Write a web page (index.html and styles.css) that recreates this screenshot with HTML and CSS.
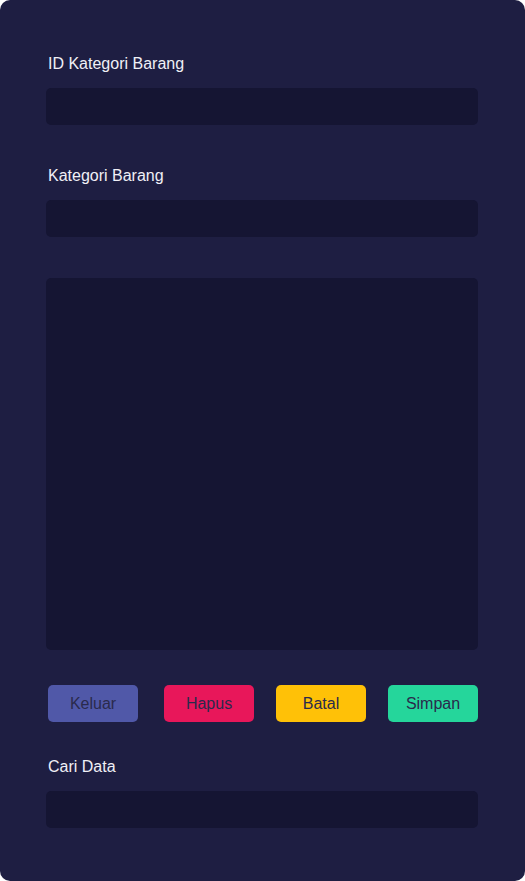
FILE: index.html
```html
<!DOCTYPE html>
<html>
<head>
<meta charset="utf-8">
<link rel="stylesheet" href="styles.css">
</head>
<body>
<div class="panel">
  <label class="label first">ID Kategori Barang</label>
  <div class="field"></div>
  <label class="label second">Kategori Barang</label>
  <div class="field"></div>
  <div class="area"></div>
  <div class="buttons">
    <button class="btn keluar">Keluar</button>
    <button class="btn hapus">Hapus</button>
    <button class="btn batal">Batal</button>
    <button class="btn simpan">Simpan</button>
  </div>
  <label class="label third">Cari Data</label>
  <div class="field"></div>
</div>
</body>
</html>
```
FILE: styles.css
```css
html, body {
  margin: 0;
  padding: 0;
  background: #ffffff;
}
.panel {
  box-sizing: border-box;
  width: 525px;
  height: 881px;
  background: #1e1e42;
  border-radius: 10px;
  padding: 55px 47px 0 46px;
  font-family: "Liberation Sans", Arial, sans-serif;
}
.label {
  display: block;
  font-size: 16px;
  line-height: 18px;
  color: #f0f0f6;
  padding-left: 2px;
  margin-bottom: 15px;
}
.label.second {
  margin-top: 42px;
}
.label.third {
  margin-top: 36px;
}
.field {
  height: 37px;
  background: #151533;
  border-radius: 5px;
}
.area {
  margin-top: 41px;
  height: 372px;
  background: #151533;
  border-radius: 5px;
}
.buttons {
  margin-top: 35px;
  display: flex;
  padding-left: 2px;
  gap: 22px;
}
.btn {
  width: 90px;
  height: 37px;
  border: none;
  border-radius: 5px;
  font-family: "Liberation Sans", Arial, sans-serif;
  font-size: 16px;
  line-height: 18px;
  color: #2a2a4c;
  padding: 1px 0 0 0;
}
.keluar {
  background: #5058a8;
  margin-right: 4px;
}
.hapus { background: #e8175a; }
.batal { background: #ffc107; }
.simpan { background: #25d69b; }
```
